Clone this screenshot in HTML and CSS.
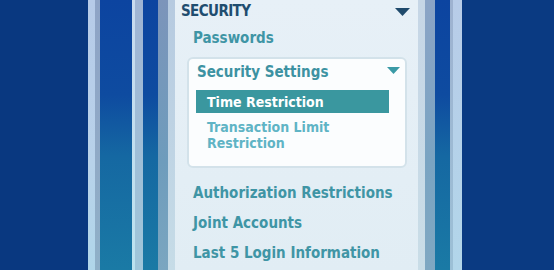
FILE: index.html
```html
<!DOCTYPE html>
<html>
<head>
<meta charset="utf-8">
<link rel="stylesheet" href="styles.css">
</head>
<body>
<div class="scene">
  <div class="fill fill-left"></div>
  <div class="st st-a"></div>
  <div class="st st-b"></div>
  <div class="st band band-w"></div>
  <div class="st st-c"></div>
  <div class="st st-d"></div>
  <div class="st band band-n"></div>
  <div class="st st-e"></div>
  <div class="st st-f"></div>
  <nav class="panel">
    <div class="head">
      <span>SECURITY</span>
      <svg class="arrow-big" width="15" height="8" viewBox="0 0 15 8"><polygon points="0,0 15,0 7.5,8"/></svg>
    </div>
    <a class="item first">Passwords</a>
    <div class="card">
      <div class="card-head">
        <span>Security Settings</span>
        <svg class="arrow-small" width="13" height="7" viewBox="0 0 13 7"><polygon points="0,0 13,0 6.5,7"/></svg>
      </div>
      <div class="sel">Time Restriction</div>
      <div class="sub">Transaction Limit<br>Restriction</div>
    </div>
    <a class="item">Authorization Restrictions</a>
    <a class="item">Joint Accounts</a>
    <a class="item">Last 5 Login Information</a>
  </nav>
  <div class="st st-g"></div>
  <div class="st st-h"></div>
  <div class="st band band-r"></div>
  <div class="st st-i"></div>
  <div class="st st-j"></div>
  <div class="fill"></div>
</div>
</body>
</html>
```
FILE: styles.css
```css
html, body {
  margin: 0;
  padding: 0;
  width: 554px;
  height: 270px;
  overflow: hidden;
  background: #0a3a82;
}
.scene {
  display: flex;
  width: 554px;
  height: 270px;
}
.fill {
  flex: 1 1 auto;
  background: #0a3a82;
}
.fill-left { flex: 0 0 88px; background: #093880; }
.st { flex: 0 0 auto; height: 270px; }
.st-a { width: 7px; background: linear-gradient(#b6cbe8, #b8d2ea 60%, #b0d6ea); }
.st-b { width: 5px; background: linear-gradient(#8ea4c6, #90aac6 60%, #8fb0c8); }
.band {
  background: linear-gradient(#0c44a0 0%, #0e4ba0 35%, #1568a2 58%, #1a7aa5 100%);
}
.band-w { width: 32px; }
.band-n { width: 15px; }
.band-r { width: 15px; }
.st-c { width: 3px; background: linear-gradient(#c8daef, #bbe2ef); }
.st-d { width: 8px; background: linear-gradient(#9fb4d4, #9fc6da); }
.st-e { width: 10px; background: linear-gradient(#7c94ba, #6e9cbc 60%, #7ba6c0); }
.st-f { width: 7px; background: linear-gradient(#b6cae0, #c6dce7); }
.st-g { width: 7px; background: linear-gradient(#c6d6e6, #c9dde7); }
.st-h { width: 10px; background: linear-gradient(#8ba4c6, #7aa4c2 60%, #7fa8c2); }
.st-i { width: 3px; background: linear-gradient(#9eb2d0, #9cc0d6); }
.st-j { width: 9px; background: linear-gradient(#b8cce8, #b2d6ea); }

.panel {
  flex: 0 0 243px;
  height: 270px;
  box-sizing: border-box;
  background: linear-gradient(#e7f0f7, #e1edf4);
  display: flex;
  flex-direction: column;
  font-family: "DejaVu Sans Condensed", "DejaVu Sans", sans-serif;
  font-stretch: condensed;
  font-weight: bold;
}
.head {
  display: flex;
  align-items: center;
  justify-content: space-between;
  height: 22px;
  line-height: 22px;
  padding: 0 8px 0 6px;
  font-size: 15px;
  color: #1f4d6f;
  letter-spacing: -0.6px;
}
.arrow-big { fill: #1f4a6c; margin-top: 1px; }
.item {
  display: block;
  font-size: 15px;
  line-height: 22px;
  padding-left: 18px;
  color: #3f95a5;
  margin-top: 8px;
}
.item.first { margin-top: 5px; }
.card {
  margin: 8px 11px 6px 12px;
  height: 111px;
  box-sizing: border-box;
  background: #fbfdfe;
  border: 2px solid #d3e2ea;
  border-radius: 6px;
  padding: 2px 5px 0 7px;
  display: flex;
  flex-direction: column;
}
.card-head {
  display: flex;
  align-items: center;
  justify-content: space-between;
  height: 22px;
  line-height: 22px;
  padding-left: 1px;
  font-size: 15px;
  color: #3d92a2;
}
.arrow-small { fill: #3a9aa6; margin-top: -4px; }
.sel {
  margin-top: 7px;
  width: 193px;
  height: 23px;
  line-height: 24px;
  box-sizing: border-box;
  padding-left: 11px;
  background: #3a979f;
  color: #ffffff;
  font-size: 14px;
}
.sub {
  margin-top: 6px;
  padding-left: 11px;
  font-size: 14px;
  line-height: 16px;
  color: #5fb4c5;
}
```
